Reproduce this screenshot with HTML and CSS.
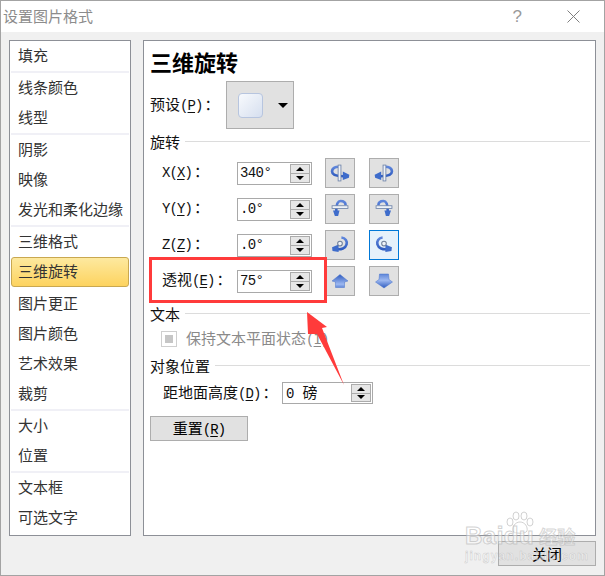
FILE: index.html
```html
<!DOCTYPE html>
<html lang="zh-CN">
<head>
<meta charset="utf-8">
<title>设置图片格式</title>
<link rel="stylesheet" href="styles.css">
</head>
<body>
<svg class="defs" aria-hidden="true">
  <defs>
    <linearGradient id="blue" x1="0" y1="0" x2="0" y2="1">
      <stop offset="0" stop-color="#5f86dc"/>
      <stop offset="1" stop-color="#2f5cc0"/>
    </linearGradient>
    <linearGradient id="blueFade" x1="0" y1="0" x2="0" y2="1">
      <stop offset="0" stop-color="#2f5cc0"/>
      <stop offset=".75" stop-color="#9db8f0"/>
      <stop offset="1" stop-color="#5f86d8"/>
    </linearGradient>
    <linearGradient id="blueFadeUp" x1="0" y1="0" x2="0" y2="1">
      <stop offset="0" stop-color="#5f86d8"/>
      <stop offset=".45" stop-color="#9db8f0"/>
      <stop offset="1" stop-color="#2f5cc0"/>
    </linearGradient>
    <symbol id="rotX" viewBox="0 0 30 30">
      <path class="arc" d="M16 8.500C10 7.500 6.500 10 6.500 13.500C6.500 17 11 18.500 18.500 18.500"/>
      <path class="head" d="M18 13.500L25 17L24.500 20L18 22.500Z"/>
      <rect class="bar" x="13" y="6.500" width="3" height="17"/>
    </symbol>
    <symbol id="rotY" viewBox="0 0 30 30">
      <path class="arc" d="M21 11C21 8 18.500 6.500 15.500 6.500C12.500 6.500 11 9 11 18"/>
      <path class="head" d="M7.500 16.500L14.500 16.500L13 22.500L9.500 22.500Z"/>
      <rect class="bar" x="6.500" y="11.500" width="17" height="3"/>
    </symbol>
    <symbol id="rotZ" viewBox="0 0 30 30">
      <path class="arc" d="M16.500 7C21 7.500 23 11 22 14.500C21 18.500 16 20 12 19.500"/>
      <path class="head" d="M6.500 17.500L13.500 14.500L13.500 22.500L7 21.500Z"/>
      <circle class="hub" cx="15" cy="13.500" r="2.500"/>
    </symbol>
  </defs>
</svg>

<main class="dialog">
  <header class="titlebar">
    <span class="title">设置图片格式</span>
    <span class="help">?</span>
    <svg class="close" viewBox="0 0 13 13" aria-label="关闭"><path d="M.5.500l12 12M12.500.500l-12 12"/></svg>
  </header>

  <div class="body">
    <nav class="nav">
      <div class="nav-item">填充</div>
      <div class="nav-sep"></div>
      <div class="nav-item">线条颜色</div>
      <div class="nav-item">线型</div>
      <div class="nav-sep"></div>
      <div class="nav-item">阴影</div>
      <div class="nav-item">映像</div>
      <div class="nav-item">发光和柔化边缘</div>
      <div class="nav-sep"></div>
      <div class="nav-item">三维格式</div>
      <div class="nav-item is-active">三维旋转</div>
      <div class="nav-sep-blank"></div>
      <div class="nav-item">图片更正</div>
      <div class="nav-item">图片颜色</div>
      <div class="nav-item">艺术效果</div>
      <div class="nav-item">裁剪</div>
      <div class="nav-sep"></div>
      <div class="nav-item">大小</div>
      <div class="nav-item">位置</div>
      <div class="nav-sep"></div>
      <div class="nav-item">文本框</div>
      <div class="nav-item">可选文字</div>
    </nav>

    <section class="pane">
      <h1 class="heading">三维旋转</h1>

      <div class="preset-row">
        <span class="preset-label">预设<span class="lat">(<u>P</u>)</span><span class="colon">：</span></span>
        <button class="preset"><span class="swatch"></span><span class="caret"></span></button>
      </div>

      <div class="section"><span>旋转</span><i class="rule"></i></div>

      <div class="rot-rows">
        <div class="rot-row">
          <span class="rot-label"><span class="lat">X(<u>X</u>)</span><span class="colon">：</span></span>
          <div class="spin-field"><span class="value lat">340°</span><span class="spin"><b class="up"></b><b class="down"></b></span></div>
          <button class="icon-btn"><svg><use href="#rotX"/></svg></button>
          <button class="icon-btn"><svg class="flip-x"><use href="#rotX"/></svg></button>
        </div>
        <div class="rot-row">
          <span class="rot-label"><span class="lat">Y(<u>Y</u>)</span><span class="colon">：</span></span>
          <div class="spin-field"><span class="value lat">.0°</span><span class="spin"><b class="up"></b><b class="down"></b></span></div>
          <button class="icon-btn"><svg><use href="#rotY"/></svg></button>
          <button class="icon-btn"><svg class="flip-x"><use href="#rotY"/></svg></button>
        </div>
        <div class="rot-row">
          <span class="rot-label"><span class="lat">Z(<u>Z</u>)</span><span class="colon">：</span></span>
          <div class="spin-field"><span class="value lat">.0°</span><span class="spin"><b class="up"></b><b class="down"></b></span></div>
          <button class="icon-btn"><svg><use href="#rotZ"/></svg></button>
          <button class="icon-btn is-on"><svg class="flip-x"><use href="#rotZ"/></svg></button>
        </div>
        <div class="rot-row">
          <span class="rot-label">透视<span class="lat">(<u>E</u>)</span><span class="colon">：</span></span>
          <div class="spin-field"><span class="value lat">75°</span><span class="spin"><b class="up"></b><b class="down"></b></span></div>
          <button class="icon-btn"><svg viewBox="0 0 28 28"><path class="solid-up" d="M14 7.500L22 14L18.500 15L18.500 20.500L9.500 20.500L9.500 15L6 14Z"/></svg></button>
          <button class="icon-btn"><svg viewBox="0 0 28 28"><path class="solid-down" d="M9.500 7L18.500 7L19 12.500L22.500 15L14 21L5.500 15L9 12.500Z"/></svg></button>
        </div>
      </div>

      <div class="section section-text"><span>文本</span><i class="rule"></i></div>
      <label class="check-row"><span class="check"><i></i></span><span class="check-text">保持文本平面状态<span class="lat">(<u>I</u>)</span></span></label>

      <div class="section section-pos"><span>对象位置</span><i class="rule"></i></div>
      <div class="height-row">
        <span class="height-label">距地面高度<span class="lat">(<u>D</u>)</span><span class="colon">：</span></span>
        <div class="spin-field wide"><span class="value"><span class="lat">0</span><span class="unit">磅</span></span><span class="spin"><b class="up"></b><b class="down"></b></span></div>
      </div>

      <button class="btn reset">重置<span class="lat">(<u>R</u>)</span></button>
    </section>
  </div>

  <footer class="footer"><button class="btn">关闭</button></footer>
</main>

<div class="callout-box"></div>
<svg class="callout-arrow" viewBox="0 0 60 90"><path d="M7 2L27 17L22 18L44 75L17 24L8 24Z"/></svg>

<div class="watermark">
  <svg class="paw" viewBox="0 0 32 24"><g><ellipse cx="6" cy="11" rx="3" ry="4"/><ellipse cx="12" cy="5" rx="3" ry="4"/><ellipse cx="20" cy="5" rx="3" ry="4"/><ellipse cx="26" cy="11" rx="3" ry="4"/><path d="M16 11C11 11 8 16 9 20C10 23 22 23 23 20C24 16 21 11 16 11Z"/></g></svg>
  <div class="wm-main"><span class="wm-latin">Baidu</span><span class="wm-cjk">经验</span></div>
  <div class="wm-url">jingyan.baidu.com</div>
</div>
</body>
</html>
```
FILE: styles.css
```css
* { box-sizing: border-box; }
html, body { margin: 0; padding: 0; }
body {
  width: 605px;
  height: 576px;
  overflow: hidden;
  position: relative;
  background: #fff;
  font: 15px/18px "Noto Sans CJK SC", sans-serif;
  color: #111;
}
.defs { display: block; width: 0; height: 0; }
.lat { font-family: "Liberation Mono", monospace; font-size: 14px; letter-spacing: -.9px; }
.colon { font-family: "Noto Sans CJK TC", sans-serif; margin-left: 2px; }
u { text-underline-offset: 2px; }

.dialog {
  width: 605px;
  height: 576px;
  display: flex;
  flex-direction: column;
  border: 1px solid #a3a3a3;
  background: #f0f0f0;
}
.titlebar {
  height: 31px;
  flex: none;
  background: #fff;
  display: flex;
  align-items: center;
  padding-left: 2px;
  color: #8c8c8c;
}
.title { flex: 1; padding-bottom: 2px; }
.help { font: 17px "Liberation Sans", sans-serif; color: #9a9a9a; margin-right: 45px; }
.close { width: 13px; height: 13px; margin-right: 24px; fill: none; stroke: #7f7f7f; stroke-width: 1; }

.body { display: flex; gap: 12px; padding: 8px 0 0 8px; height: 504px; flex: none; }
.nav, .pane {
  height: 496px;
  background: #fff;
  border: 1px solid #8d9097;
}
.nav { width: 122px; padding: 0 1px; color: #333; }
.nav-item {
  height: 30px;
  display: flex;
  align-items: center;
  padding: 0 0 2px 7px;
  white-space: nowrap;
}
.nav-sep { height: 2px; background: #f0f0f6; }
.nav-sep-blank { height: 2px; }
.nav-item.is-active {
  border: 1px solid #c9a850;
  border-radius: 3px;
  background: linear-gradient(#fde99f, #fdd35f);
  padding-left: 6px;
}

.pane { width: 453px; padding: 7px 5px 0 6px; }
.heading { margin: 0; font-size: 22px; line-height: 27px; font-weight: 700; color: #000; height: 33px; }
.preset-row { display: flex; align-items: center; height: 48px; }
.preset-label { width: 76px; }
.preset {
  width: 68px;
  height: 48px;
  padding: 0 0 0 11px;
  background: #e1e1e1;
  border: 1px solid #adadad;
  display: flex;
  align-items: center;
}
.swatch {
  width: 25px;
  height: 25px;
  border: 1px solid #b7c5df;
  border-radius: 4px;
  background: linear-gradient(135deg, #f8fafd, #d6dfef);
}
.caret {
  margin-left: 15px;
  border: 5px solid transparent;
  border-top: 5px solid #000;
  border-bottom: 0;
}

.section { display: flex; align-items: center; gap: 5px; height: 18px; margin-top: 4px; padding-bottom: 1px; }
.rule { flex: 1; height: 1px; background: #dcdcdc; }
.section-text { margin-top: 9px; }
.section-pos { margin-top: 10px; }

.rot-rows { display: flex; flex-direction: column; gap: 6px; margin-top: 7px; }
.rot-row { display: flex; align-items: center; height: 30px; padding-left: 12px; }
.rot-label { width: 75px; padding-bottom: 2px; }

.spin-field {
  width: 75px;
  height: 23px;
  border: 1px solid #a9a9a9;
  background: #fff;
  display: flex;
  align-items: center;
  justify-content: space-between;
  padding: 1px 0 1px 2px;
}
.spin-field.wide { width: 91px; height: 22px; padding-left: 3px; }
.value { font-size: 15px; }
.value.lat { font-size: 14px; letter-spacing: -.6px; }
.unit { margin-left: 9px; }
.spin { width: 20px; height: 100%; margin-right: 1px; display: flex; flex-direction: column; }
.spin b {
  flex: 1;
  background: #e6e6e6;
  border: 1px solid #ababab;
  display: flex;
  align-items: center;
  justify-content: center;
}
.spin b + b { border-top: 0; }
.spin b::after { content: ""; border: 4px solid transparent; }
.spin .up::after { border-bottom: 4px solid #000; border-top: 0; }
.spin .down::after { border-top: 4px solid #000; border-bottom: 0; }

.icon-btn {
  width: 30px;
  height: 30px;
  margin-left: 14px;
  padding: 0;
  background: #e1e1e1;
  border: 1px solid #adadad;
  display: flex;
  align-items: center;
  justify-content: center;
}
.spin-field + .icon-btn { margin-left: 13px; }
.icon-btn.is-on { background: #e5f1fb; border-color: #0078d7; }
.icon-btn svg { width: 28px; height: 28px; display: block; }
.flip-x { transform: scaleX(-1); }
.arc { fill: none; stroke: url(#blue); stroke-width: 2.800; }
.head { fill: #3e6ccb; }
.bar { fill: #eef2f8; stroke: #6f84a8; stroke-width: .9; }
.hub { fill: #eef2f8; stroke: #6f7f99; stroke-width: 1.100; }
.solid-up { fill: url(#blueFade); stroke: #4a74cc; stroke-width: .5; }
.solid-down { fill: url(#blueFadeUp); stroke: #4a74cc; stroke-width: .5; }

.check-row { display: flex; align-items: center; gap: 9px; height: 16px; margin-top: 8px; padding-left: 11px; color: #8a8a8a; }
.check { width: 16px; height: 16px; border: 1px solid #cfcfcf; background: #fff; display: flex; align-items: center; justify-content: center; }
.check i { width: 8px; height: 8px; background: #c6c6c6; }

.height-row { display: flex; align-items: center; height: 22px; margin-top: 7px; padding-left: 13px; }
.height-label { width: 119px; white-space: nowrap; }

.btn {
  width: 98px;
  height: 25px;
  padding: 0;
  background: #e1e1e1;
  border: 1px solid #adadad;
  font: inherit;
  color: #000;
}
.reset { display: block; margin: 12px 0 0; }
.footer { display: flex; justify-content: flex-end; padding: 5px 8px 0 0; }

.callout-box {
  position: absolute;
  left: 149px;
  top: 257px;
  width: 178px;
  height: 46px;
  border: 3px solid #ff3b3b;
}
.callout-arrow {
  position: absolute;
  left: 300px;
  top: 310px;
  width: 60px;
  height: 90px;
  fill: #ff3b3b;
}

.watermark {
  position: absolute;
  left: 465px;
  top: 511px;
  width: 110px;
  height: 54px;
  pointer-events: none;
}
.paw {
  position: absolute;
  left: 39px;
  top: 0;
  width: 32px;
  height: 24px;
  fill: rgba(255, 255, 255, .4);
  stroke: rgba(180, 180, 180, .6);
  stroke-width: 1;
}
.wm-main {
  position: absolute;
  left: 0;
  top: 12px;
  display: flex;
  align-items: center;
  gap: 5px;
  white-space: nowrap;
}
.wm-latin {
  font: 700 24px/26px "Liberation Sans", sans-serif;
  letter-spacing: .5px;
  color: rgba(255, 255, 255, .45);
  -webkit-text-stroke: 1px rgba(180, 180, 180, .6);
}
.wm-cjk {
  font: 700 18px/26px "Noto Sans CJK SC", sans-serif;
  color: rgba(255, 255, 255, .45);
  -webkit-text-stroke: 1px rgba(180, 180, 180, .55);
}
.wm-url {
  position: absolute;
  left: 0;
  top: 37px;
  font: 700 12px/16px "Liberation Sans", sans-serif;
  letter-spacing: 1.100px;
  white-space: nowrap;
  color: rgba(255, 255, 255, .45);
  -webkit-text-stroke: .5px rgba(180, 180, 180, .6);
}
```
